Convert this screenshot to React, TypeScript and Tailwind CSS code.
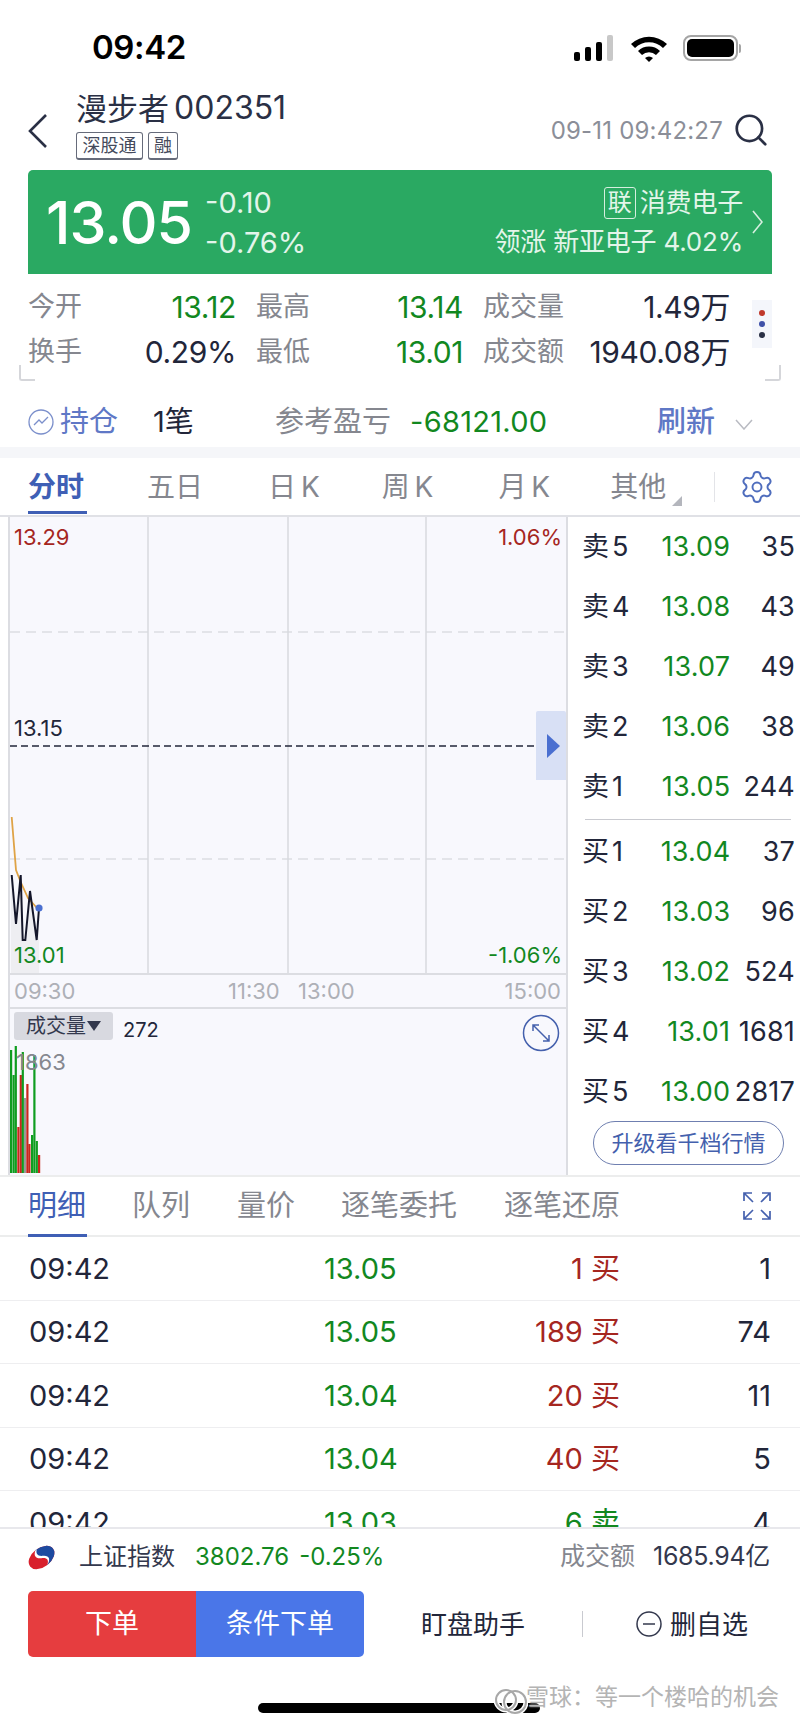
import { Search, Settings } from "lucide-react";

const font = "font-['Inter','Noto_Sans_CJK_SC',sans-serif]";

const asks = [
  ["卖 5", "13.09", "35"],
  ["卖 4", "13.08", "43"],
  ["卖 3", "13.07", "49"],
  ["卖 2", "13.06", "38"],
  ["卖 1", "13.05", "244"],
];
const bids = [
  ["买 1", "13.04", "37"],
  ["买 2", "13.03", "96"],
  ["买 3", "13.02", "524"],
  ["买 4", "13.01", "1681"],
  ["买 5", "13.00", "2817"],
];
const trades = [
  ["09:42", "13.05", "1 买", "1", true],
  ["09:42", "13.05", "189 买", "74", true],
  ["09:42", "13.04", "20 买", "11", true],
  ["09:42", "13.04", "40 买", "5", true],
  ["09:42", "13.03", "6 卖", "4", false],
] as const;

// x, top, colour of the volume bars
const bars: [number, number, string][] = [
  [11, 1050, "#0f9d20"],
  [13.5, 1075, "#0f9d20"],
  [15.7, 1046, "#0f9d20"],
  [18.3, 1127, "#c9261d"],
  [20.7, 1075, "#c9261d"],
  [22.7, 1052, "#0f9d20"],
  [25, 1098, "#999999"],
  [27.3, 1084, "#c9261d"],
  [29.3, 1144, "#c9261d"],
  [32, 1135, "#0f9d20"],
  [34.3, 1055, "#0f9d20"],
  [36.7, 1141, "#0f9d20"],
  [39, 1155, "#c9261d"],
];

function BookRow({ row }: { row: string[] }) {
  return (
    <div className="flex h-[60px] items-center pl-[14px] pr-[5px] text-[27px] tracking-[0.2px] text-[#22263a]">
      <span className="w-[60px] whitespace-nowrap [word-spacing:-5px]">{row[0]}</span>
      <span className="w-[89px] text-right text-[#12881f]">{row[1]}</span>
      <span className="w-[65px] whitespace-nowrap text-right">{row[2]}</span>
    </div>
  );
}

export default function App() {
  return (
    <div className={`${font} w-[800px] h-[1731px] overflow-hidden bg-white text-[#22263a]`}>
      {/* status bar */}
      <div className="flex h-[92px] items-center pl-[92px] pr-[59px] pt-[4px] text-black">
        <span className="text-[33px] font-semibold tracking-[-0.4px]">09:42</span>
        <div className="ml-auto flex items-center gap-[14px]">
          <svg width="42" height="26" viewBox="0 0 42 26">
            <rect x="0" y="17" width="6" height="9" rx="2" fill="#000" />
            <rect x="11" y="12" width="6" height="14" rx="2" fill="#000" />
            <rect x="22" y="7" width="6" height="19" rx="2" fill="#000" />
            <rect x="33" y="0" width="6" height="26" rx="2" fill="#c8c8c8" />
          </svg>
          <svg width="38" height="27" viewBox="0 0 38 27">
            <path d="M1 9 A26 26 0 0 1 37 9 L33 13 A20 20 0 0 0 5 13 Z" fill="#000" />
            <path d="M8 16 A16 16 0 0 1 30 16 L26 20 A10 10 0 0 0 12 20 Z" fill="#000" />
            <path d="M15 23 A6 6 0 0 1 23 23 L19 27 Z" fill="#000" />
          </svg>
          <div className="ml-[1px] flex items-center">
            <div className="flex h-[26px] w-[55px] items-center justify-center rounded-[8px] border-[2px] border-[#a5a5a5]">
              <div className="h-[18px] w-[47px] rounded-[5px] bg-black" />
            </div>
            <div className="ml-[1px] h-[9px] w-[2px] rounded-r bg-[#a5a5a5]" />
          </div>
        </div>
      </div>

      {/* header */}
      <div className="flex h-[78px] items-center pr-[30px]">
        <svg className="ml-[27px]" width="21" height="36" viewBox="0 0 21 36" fill="none" stroke="#2a3045" strokeWidth="2.6">
          <path d="M19 2L3 18L19 34" />
        </svg>
        <div className="-mt-[12px] ml-[28px] flex flex-col">
          <div className="flex h-[36px] items-center text-[31px] leading-none text-[#2a3045]">
            <span>漫步者</span>
            <span className="ml-[5px] text-[32px]">002351</span>
          </div>
          <div className="mt-[6px] flex gap-[5px] text-[18px] leading-none text-[#444a5c]">
            <span className="flex h-[28px] w-[67px] items-center justify-center rounded-[3px] border border-b-2 border-[#666b7a]">深股通</span>
            <span className="flex h-[28px] w-[30px] items-center justify-center rounded-[3px] border border-b-2 border-[#666b7a]">融</span>
          </div>
        </div>
        <span className="ml-auto text-[24px] tracking-[0.2px] text-[#8b8e98]">09-11 09:42:27</span>
        <Search className="-mt-[3px] ml-[9px] h-[38px] w-[38px] text-[#2a3045]" strokeWidth={1.7} />
      </div>

      {/* price banner */}
      <div className="mx-[28px] flex h-[104px] items-center rounded-t-[5px] bg-[#2aa962] pl-[18px] pr-[9px] text-white">
        <span className="text-[59px] font-medium leading-none tracking-[-1px]">13.05</span>
        <div className="ml-[13px] flex flex-col gap-[9px] text-[29px] leading-[31px] text-[#e3f5ea]">
          <span>-0.10</span>
          <span>-0.76%</span>
        </div>
        <div className="ml-auto flex flex-col items-end gap-[7px] text-[26px] leading-[32px] text-[#e3f5ea]">
          <div className="flex items-center gap-[4px]">
            <span className="flex h-[32px] w-[32px] items-center justify-center rounded-[3px] border border-[#d5efdf] text-[24px]">联</span>
            <span className="tracking-[-0.2px]">消费电子</span>
          </div>
          <span className="whitespace-nowrap tracking-[-0.2px]">领涨 新亚电子 4.02%</span>
        </div>
        <svg className="ml-[9px]" width="11" height="24" viewBox="0 0 11 24" fill="none" stroke="#d5efdf" strokeWidth="1.6">
          <path d="M1 1L10 12L1 23" />
        </svg>
      </div>

      {/* stats */}
      <div className="relative h-[110px] pl-[28px] pt-[11px] text-[27px]">
        {[
          ["今开", "13.12", "最高", "13.14", "成交量", "1.49万", true],
          ["换手", "0.29%", "最低", "13.01", "成交额", "1940.08万", false],
        ].map((r, i) => (
          <div key={i} className="flex h-[45px] items-center whitespace-nowrap">
            <span className="w-[56px] text-[#85878f]">{r[0]}</span>
            <span className={`w-[152px] text-right text-[30px] tracking-[-0.4px] ${r[6] ? "text-[#12881f]" : "text-[#22263a]"}`}>{r[1]}</span>
            <span className="ml-[20px] w-[56px] text-[#85878f]">{r[2]}</span>
            <span className="w-[151px] text-right text-[30px] tracking-[-0.4px] text-[#12881f]">{r[3]}</span>
            <span className="ml-[20px] w-[84px] text-[#85878f]">{r[4]}</span>
            <span className="w-[163px] text-right text-[30px] tracking-[-0.4px] text-[#22263a]">{r[5]}</span>
          </div>
        ))}
        <div className="absolute left-[752px] top-[26px] flex h-[48px] w-[20px] flex-col items-center justify-center gap-[5px] bg-[#f4f6fb]">
          <span className="h-[6px] w-[6px] rounded-full bg-[#c0392b]" />
          <span className="h-[6px] w-[6px] rounded-full bg-[#3f51a8]" />
          <span className="h-[6px] w-[6px] rounded-full bg-[#2a3045]" />
        </div>
        <div className="absolute left-[19px] top-[91px] h-[16px] w-[16px] rounded-bl-[3px] border-b-2 border-l-2 border-[#d5d6da]" />
        <div className="absolute left-[765px] top-[91px] h-[16px] w-[16px] rounded-br-[3px] border-b-2 border-r-2 border-[#d5d6da]" />
      </div>

      {/* position row */}
      <div className="flex h-[63px] items-center pl-[28px] pt-[12px] text-[29px]">
        <svg width="26" height="26" viewBox="0 0 26 26" fill="none" stroke="#7b8fcb" strokeWidth="1.3">
          <circle cx="13" cy="13" r="12" />
          <path d="M6 16 L11 11 L14 14 L20 8" />
        </svg>
        <span className="ml-[6px] w-[93px] whitespace-nowrap text-[#5f78c6]">持仓</span>
        <span className="w-[122px] whitespace-nowrap text-[#22263a]">1笔</span>
        <span className="w-[135px] whitespace-nowrap text-[#85878f]">参考盈亏</span>
        <span className="w-[247px] text-[#12881f] tracking-[0.3px]">-68121.00</span>
        <span className="w-[78px] whitespace-nowrap font-medium text-[#5f78c6]">刷新</span>
        <svg className="mt-[6px]" width="18" height="11" viewBox="0 0 18 11" fill="none" stroke="#b9bbc2" strokeWidth="1.5">
          <path d="M1 1L9 10L17 1" />
        </svg>
      </div>
      <div className="h-[11px] bg-[#f5f6f9]" />

      {/* chart tabs */}
      <div className="relative flex h-[57px] items-center text-[28px] text-[#85878f] [word-spacing:-3px]">
        <span className="ml-[28px] font-bold text-[#3f5fb5]">分时</span>
        <span className="ml-[63px]">五日</span>
        <span className="ml-[65px]">日 K</span>
        <span className="ml-[62px]">周 K</span>
        <span className="ml-[65px]">月 K</span>
        <span className="ml-[60px]">其他</span>
        <div className="absolute left-[672px] top-[38px] h-0 w-0 border-b-[10px] border-l-[10px] border-b-[#b4b6bd] border-l-transparent" />
        <div className="absolute left-[714px] top-[14px] h-[30px] w-px bg-[#e3e4e8]" />
        <Settings className="absolute left-[739px] top-[11px] h-[36px] w-[36px] text-[#4f6dbd]" strokeWidth={1.3} />
        <div className="absolute bottom-[1px] left-[28px] h-[3px] w-[59px] bg-[#3f5fb5]" />
      </div>

      {/* chart + order book */}
      <div className="flex h-[660px] border-t-2 border-[#e0e1e6]">
        <div className="relative ml-[8px] flex w-[560px] shrink-0 flex-col border-x-2 border-[#dcdde2] bg-[#f8f8fd]">
          <svg className="absolute left-[-10px] top-[-517px] h-[1731px] w-[800px]" viewBox="0 0 800 1731" fill="none">
            <path d="M10 632H566M10 859H566" stroke="#dcdde2" strokeWidth="1.5" strokeDasharray="10 6" />
            <path d="M148 517V973M288 517V973M426 517V973" stroke="#d8d9de" strokeWidth="1.5" />
            <path d="M10 746H566" stroke="#22263a" strokeWidth="1.3" strokeDasharray="7 4" />
            <path d="M11 973V875L16 924L21 875L23 940H25L30 891L37 940L39 908V973Z" fill="#eeeef2" />
            <path d="M11.7 817L16 870L20.7 882L28 898L37 908" stroke="#dfa346" strokeWidth="1.8" />
            <path d="M11.7 875L16 924L20.7 875L22.7 940H25.3L30 891L36.7 940L39 908" stroke="#14162a" strokeWidth="2" />
            <circle cx="39" cy="908" r="3.6" fill="#4a6fd0" />
            {bars.map(([x, top, c]) => (
              <rect key={x} x={x - 1} y={top} width="2.2" height={1173 - top} fill={c} />
            ))}
          </svg>

          <div className="relative h-[456px] text-[22px] leading-none">
            <span className="absolute left-[4px] top-[9px] text-[#a5261f]">13.29</span>
            <span className="absolute right-[4px] top-[9px] text-[#a5261f]">1.06%</span>
            <span className="absolute left-[4px] top-[200px] text-[#22263a]">13.15</span>
            <span className="absolute left-[4px] top-[427px] text-[#12881f]">13.01</span>
            <span className="absolute right-[4px] top-[427px] text-[#12881f]">-1.06%</span>
            <div className="absolute right-[0px] top-[194px] flex h-[69px] w-[30px] items-center justify-center rounded-t-[2px] bg-[#d8e0f5]">
              <div className="ml-[4px] h-0 w-0 border-y-[12px] border-l-[13px] border-y-transparent border-l-[#4a6fd0]" />
            </div>
          </div>

          <div className="relative flex h-[36px] items-center border-y-2 border-[#dcdde2] text-[22px] text-[#aeb0b7]">
            <span className="absolute left-[4px]">09:30</span>
            <span className="absolute left-[218px]">11:30</span>
            <span className="absolute left-[288px]">13:00</span>
            <span className="absolute right-[5px]">15:00</span>
          </div>

          <div className="relative flex-1">
            <div className="absolute left-[4px] top-[3px] flex h-[28px] w-[99px] items-center justify-center gap-[1px] rounded-[3px] bg-[#d8d9e0] text-[20px] text-[#33384d]">
              <span className="whitespace-nowrap">成交量</span>
              <span className="h-0 w-0 border-x-[7px] border-t-[10px] border-x-transparent border-t-[#33384d]" />
            </div>
            <span className="absolute left-[113px] top-[6px] text-[20px] text-[#22263a]">272</span>
            <span className="absolute left-[6px] top-[42px] text-[22px] leading-none text-[#85878f]">1863</span>
            <svg className="absolute left-[512px] top-[5px]" width="38" height="38" viewBox="0 0 38 38" fill="none" stroke="#4460ad" strokeWidth="1.5">
              <circle cx="19" cy="19" r="17.5" />
              <path d="M11 11L27 27M11 17V11H17M27 21V27H21" />
            </svg>
          </div>
        </div>

        <div className="flex w-[232px] flex-col">
          {asks.map((r) => (
            <BookRow key={r[0]} row={r} />
          ))}
          <div className="my-[2px] ml-[17px] mr-[9px] h-px bg-[#c9cad0]" />
          {bids.map((r) => (
            <BookRow key={r[0]} row={r} />
          ))}
          <div className="-mt-[1px] ml-[25px] flex h-[44px] w-[191px] items-center justify-center rounded-full border border-[#6f7fb0] text-[22px] text-[#4460ad]">
            升级看千档行情
          </div>
        </div>
      </div>

      {/* detail tabs */}
      <div className="relative flex h-[62px] items-center border-y-2 border-[#eceded] text-[29px] text-[#85878f]">
        <span className="ml-[28px] text-[#3f5fb5]">明细</span>
        <span className="ml-[46px]">队列</span>
        <span className="ml-[47px]">量价</span>
        <span className="ml-[46px]">逐笔委托</span>
        <span className="ml-[47px]">逐笔还原</span>
        <svg className="absolute left-[743px] top-[15px]" width="28" height="28" viewBox="0 0 28 28" fill="none" stroke="#4460ad" strokeWidth="1.7">
          <path d="M1 9V1H9M1 1L10 10M27 9V1H19M27 1L18 10M1 19V27H9M1 27L10 18M27 19V27H19M27 27L18 18" />
        </svg>
        <div className="absolute bottom-[-2px] left-[28px] h-[3px] w-[59px] bg-[#3f5fb5]" />
      </div>

      {/* trades */}
      <div className="h-[290px] overflow-hidden text-[29px]">
        {trades.map((t, i) => (
          <div key={i} className="flex h-[63.5px] items-center border-b border-[#eeeef0] pl-[29px]">
            <span className="w-[295px] text-[#22263a]">{t[0]}</span>
            <span className="w-[90px] text-[#12881f]">{t[1]}</span>
            <span className={`w-[206px] text-right ${t[4] ? "text-[#a5261f]" : "text-[#12881f]"}`}>{t[2]}</span>
            <span className="w-[151px] text-right text-[#22263a]">{t[3]}</span>
          </div>
        ))}
      </div>

      {/* footer */}
      <div className="flex h-[58px] items-center border-t-2 border-[#e8e8ec] pl-[28px] pr-[30px] text-[24px]">
        <svg width="27" height="27" viewBox="0 0 27 27">
          <g transform="rotate(-38 13.5 13.5)">
            <ellipse cx="13.5" cy="13.5" rx="14.5" ry="9.5" fill="#d8202c" />
            <path d="M13.5 4 A14.5 9.5 0 0 1 28 13.5 A14.5 9.5 0 0 1 13.5 23 C19 20 19 17 13.5 13.5 C9 11 9 7 13.5 4Z" fill="#1d4aa0" />
            <path d="M13.5 4 C8 7 8 11 13 14 C18 17 18 20 13.5 23 C20 20.5 21 16.5 15.5 13 C11 10 11 7 15 4Z" fill="#fff" />
          </g>
        </svg>
        <span className="ml-[24px] whitespace-nowrap text-[#33384d]">上证指数</span>
        <span className="ml-[20px] text-[#12881f]">3802.76</span>
        <span className="ml-[10px] text-[#12881f]">-0.25%</span>
        <span className="ml-auto whitespace-nowrap text-[25px] text-[#85878f]">成交额</span>
        <span className="ml-[18px] whitespace-nowrap text-[25px] tracking-[-0.3px] text-[#33384d]">1685.94亿</span>
      </div>

      <div className="mt-[6px] flex h-[66px] items-center pl-[28px] text-[26px]">
        <div className="flex h-[66px] w-[168px] items-center justify-center rounded-l-[5px] bg-[#e63d3f] text-[27px] text-white">下单</div>
        <div className="flex h-[66px] w-[168px] items-center justify-center rounded-r-[5px] bg-[#4a76e8] text-[27px] text-white">条件下单</div>
        <span className="ml-[57px] w-[161px] whitespace-nowrap text-[#22263a]">盯盘助手</span>
        <div className="h-[26px] w-px bg-[#c9cad0]" />
        <svg className="ml-[53px]" width="26" height="26" viewBox="0 0 26 26" fill="none" stroke="#33384d" strokeWidth="1.5">
          <circle cx="13" cy="13" r="12" />
          <path d="M7 13H19" />
        </svg>
        <span className="ml-[8px] whitespace-nowrap text-[#22263a]">删自选</span>
      </div>

      {/* home indicator + watermark */}
      <div className="relative ml-[258px] mt-[46px] h-[10px] w-[282px] rounded-full bg-black">
        <svg className="absolute left-[236px] top-[-18px]" width="34" height="34" viewBox="0 0 34 34" fill="none">
          <g stroke="#fff" strokeWidth="5">
            <circle cx="12" cy="15" r="10" />
            <circle cx="21" cy="17" r="11" />
          </g>
          <g stroke="#a8a8a8" strokeWidth="2">
            <circle cx="12" cy="15" r="10" />
            <circle cx="21" cy="17" r="11" />
          </g>
        </svg>
        <span className="absolute left-[268px] top-[-17px] whitespace-nowrap text-[23px] leading-none text-[#b4b4b4] [text-shadow:0_0_2px_#ffffff]">雪球：等一个楼哈的机会</span>
      </div>
    </div>
  );
}
